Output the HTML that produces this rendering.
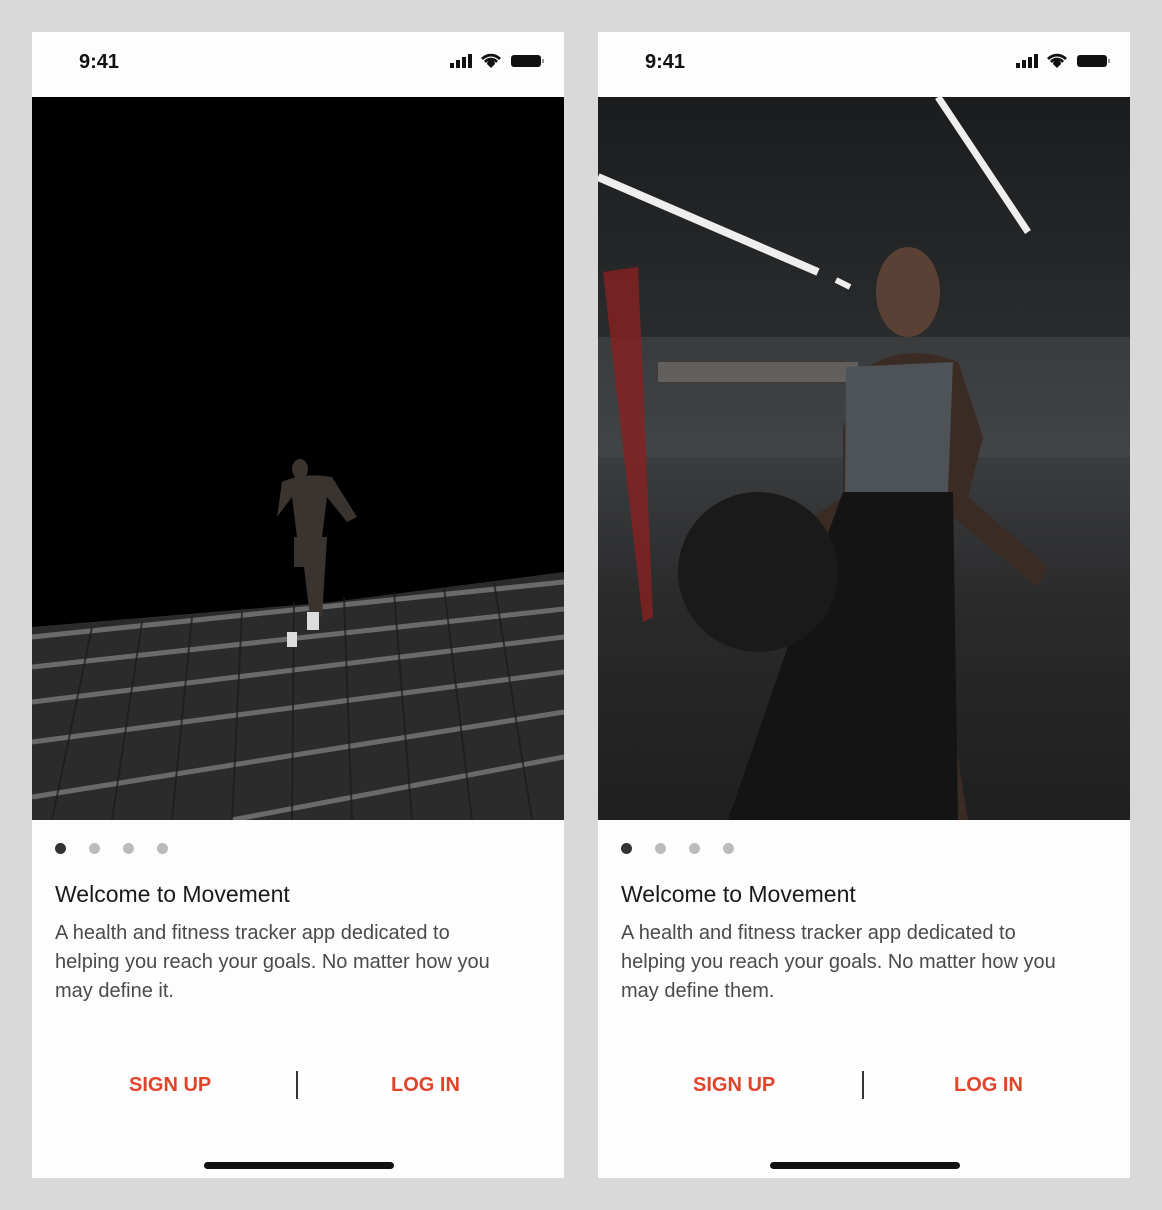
<!DOCTYPE html>
<html><head><style>
body{margin:0;width:1162px;height:1210px;background:#d9d9d9;font-family:"Liberation Sans",sans-serif;position:relative;overflow:hidden}
.ph{position:absolute;top:32px;width:532px;height:1146px;background:#fdfdfd}
.time{position:absolute;left:47px;top:19px;font-size:20px;font-weight:bold;color:#111}
.st{position:absolute;right:20px;top:20px}
.img{position:absolute;left:0;top:65px;width:532px;height:723px;overflow:hidden}
.dot{position:absolute;top:811px;width:11px;height:11px;border-radius:50%;background:#bbb}
.t{position:absolute;left:23px;top:849px;font-size:23px;color:#1a1a1a}
.b{position:absolute;left:23px;top:887px;width:455px;font-size:20px;line-height:29px;color:#4a4a4a}
.btn{position:absolute;top:1042px;font-size:20px;font-weight:bold;color:#e0452b}
.sep{position:absolute;left:264px;top:1039px;width:2px;height:28px;background:#333}
.home{position:absolute;left:172px;top:1130px;width:190px;height:7px;border-radius:4px;background:#111}
</style></head><body>

<div class="ph" style="left:32px">
<div class="time">9:41</div>
<svg class="st" width="94" height="18" viewBox="0 0 94 18"><rect x="0" y="11" width="4" height="5" fill="#111"/><rect x="6" y="8" width="4" height="8" fill="#111"/><rect x="12" y="5" width="4" height="11" fill="#111"/><rect x="18" y="2" width="4" height="14" fill="#111"/><path d="M31 6a14 14 0 0 1 20 0l-2 2a11 11 0 0 0-16 0zM34 9a9 9 0 0 1 14 0l-2 2a6 6 0 0 0-10 0zM37 12a4 4 0 0 1 8 0l-4 4z" fill="#111"/><rect x="61" y="3" width="30" height="12" rx="3" fill="#111"/><rect x="92" y="7" width="2" height="4" fill="#999"/></svg>
<div class="img" style="background:#000">
<svg width="532" height="723">
<polygon points="0,530 300,505 532,475 532,723 0,723" fill="#2b2b2b"/>
<g stroke="#6a6a6a" stroke-width="5">
<line x1="0" y1="540" x2="532" y2="485"/><line x1="0" y1="570" x2="532" y2="512"/><line x1="0" y1="605" x2="532" y2="540"/><line x1="0" y1="645" x2="532" y2="575"/><line x1="0" y1="700" x2="532" y2="615"/><line x1="200" y1="723" x2="532" y2="660"/>
</g>
<g stroke="#1a1a1a" stroke-width="2" opacity=".7">
<line x1="20" y1="723" x2="60" y2="530"/><line x1="80" y1="723" x2="110" y2="525"/><line x1="140" y1="723" x2="160" y2="520"/><line x1="200" y1="723" x2="210" y2="515"/><line x1="260" y1="723" x2="262" y2="505"/><line x1="320" y1="723" x2="312" y2="500"/><line x1="380" y1="723" x2="362" y2="495"/><line x1="440" y1="723" x2="412" y2="490"/><line x1="500" y1="723" x2="462" y2="485"/>
</g>
<g fill="#3a3430"><ellipse cx="268" cy="372" rx="8" ry="10"/><path d="M250 385 Q270 375 300 380 L325 420 L315 425 L295 400 L290 440 L265 440 L260 400 L245 420 Z"/><path d="M262 440 L295 440 L290 520 L278 520 L272 470 L262 470Z"/></g>
<path d="M255 535l10 0l0 15l-10 0zM275 515l12 0l0 18l-12 0z" fill="#ddd"/>
</svg>
</div>
<div class="dot" style="left:23px;background:#333"></div><div class="dot" style="left:57px"></div><div class="dot" style="left:91px"></div><div class="dot" style="left:125px"></div>
<div class="t">Welcome to Movement</div>
<div class="b">A health and fitness tracker app dedicated to helping you reach your goals. No matter how you may define it.</div>
<div class="btn" style="left:97px">SIGN UP</div><div class="sep"></div><div class="btn" style="left:359px">LOG IN</div>
<div class="home"></div>
</div>

<div class="ph" style="left:598px">
<div class="time">9:41</div>
<svg class="st" width="94" height="18" viewBox="0 0 94 18"><rect x="0" y="11" width="4" height="5" fill="#111"/><rect x="6" y="8" width="4" height="8" fill="#111"/><rect x="12" y="5" width="4" height="11" fill="#111"/><rect x="18" y="2" width="4" height="14" fill="#111"/><path d="M31 6a14 14 0 0 1 20 0l-2 2a11 11 0 0 0-16 0zM34 9a9 9 0 0 1 14 0l-2 2a6 6 0 0 0-10 0zM37 12a4 4 0 0 1 8 0l-4 4z" fill="#111"/><rect x="61" y="3" width="30" height="12" rx="3" fill="#111"/><rect x="92" y="7" width="2" height="4" fill="#999"/></svg>
<div class="img" style="background:linear-gradient(180deg,#1a1c1e 0%,#2a2c2e 35%,#3a3c3e 50%,#2a2a2b 70%,#1f1f20 100%)">
<svg width="532" height="723">
<rect x="0" y="240" width="532" height="120" fill="#4a4c4e" opacity=".5"/>
<rect x="60" y="265" width="200" height="20" fill="#8a8078" opacity=".5"/>
<line x1="0" y1="80" x2="220" y2="175" stroke="#eee" stroke-width="8"/>
<line x1="340" y1="0" x2="430" y2="135" stroke="#eee" stroke-width="7"/>
<line x1="238" y1="183" x2="252" y2="190" stroke="#eee" stroke-width="6"/>
<path d="M5 175 L40 170 L55 520 L45 525 Z" fill="#8a2020" opacity=".8"/>
<ellipse cx="310" cy="195" rx="32" ry="45" fill="#5a4035"/>
<path d="M270 270 Q310 245 360 265 L385 340 L370 400 L450 470 L440 490 L355 420 L350 600 L370 723 L300 723 L260 600 L245 480 L180 450 L200 430 L245 400 L245 330 Z" fill="#3a2b25"/>
<path d="M248 270 L355 265 L350 395 L247 395 Z" fill="#4d5357"/>
<path d="M245 395 L355 395 L360 723 L130 723 L200 520 Z" fill="#141414"/>
<circle cx="160" cy="475" r="80" fill="#1a1a1a"/>
</svg>
</div>
<div class="dot" style="left:23px;background:#333"></div><div class="dot" style="left:57px"></div><div class="dot" style="left:91px"></div><div class="dot" style="left:125px"></div>
<div class="t">Welcome to Movement</div>
<div class="b">A health and fitness tracker app dedicated to helping you reach your goals. No matter how you may define them.</div>
<div class="btn" style="left:95px">SIGN UP</div><div class="sep"></div><div class="btn" style="left:356px">LOG IN</div>
<div class="home"></div>
</div>
</body></html>
